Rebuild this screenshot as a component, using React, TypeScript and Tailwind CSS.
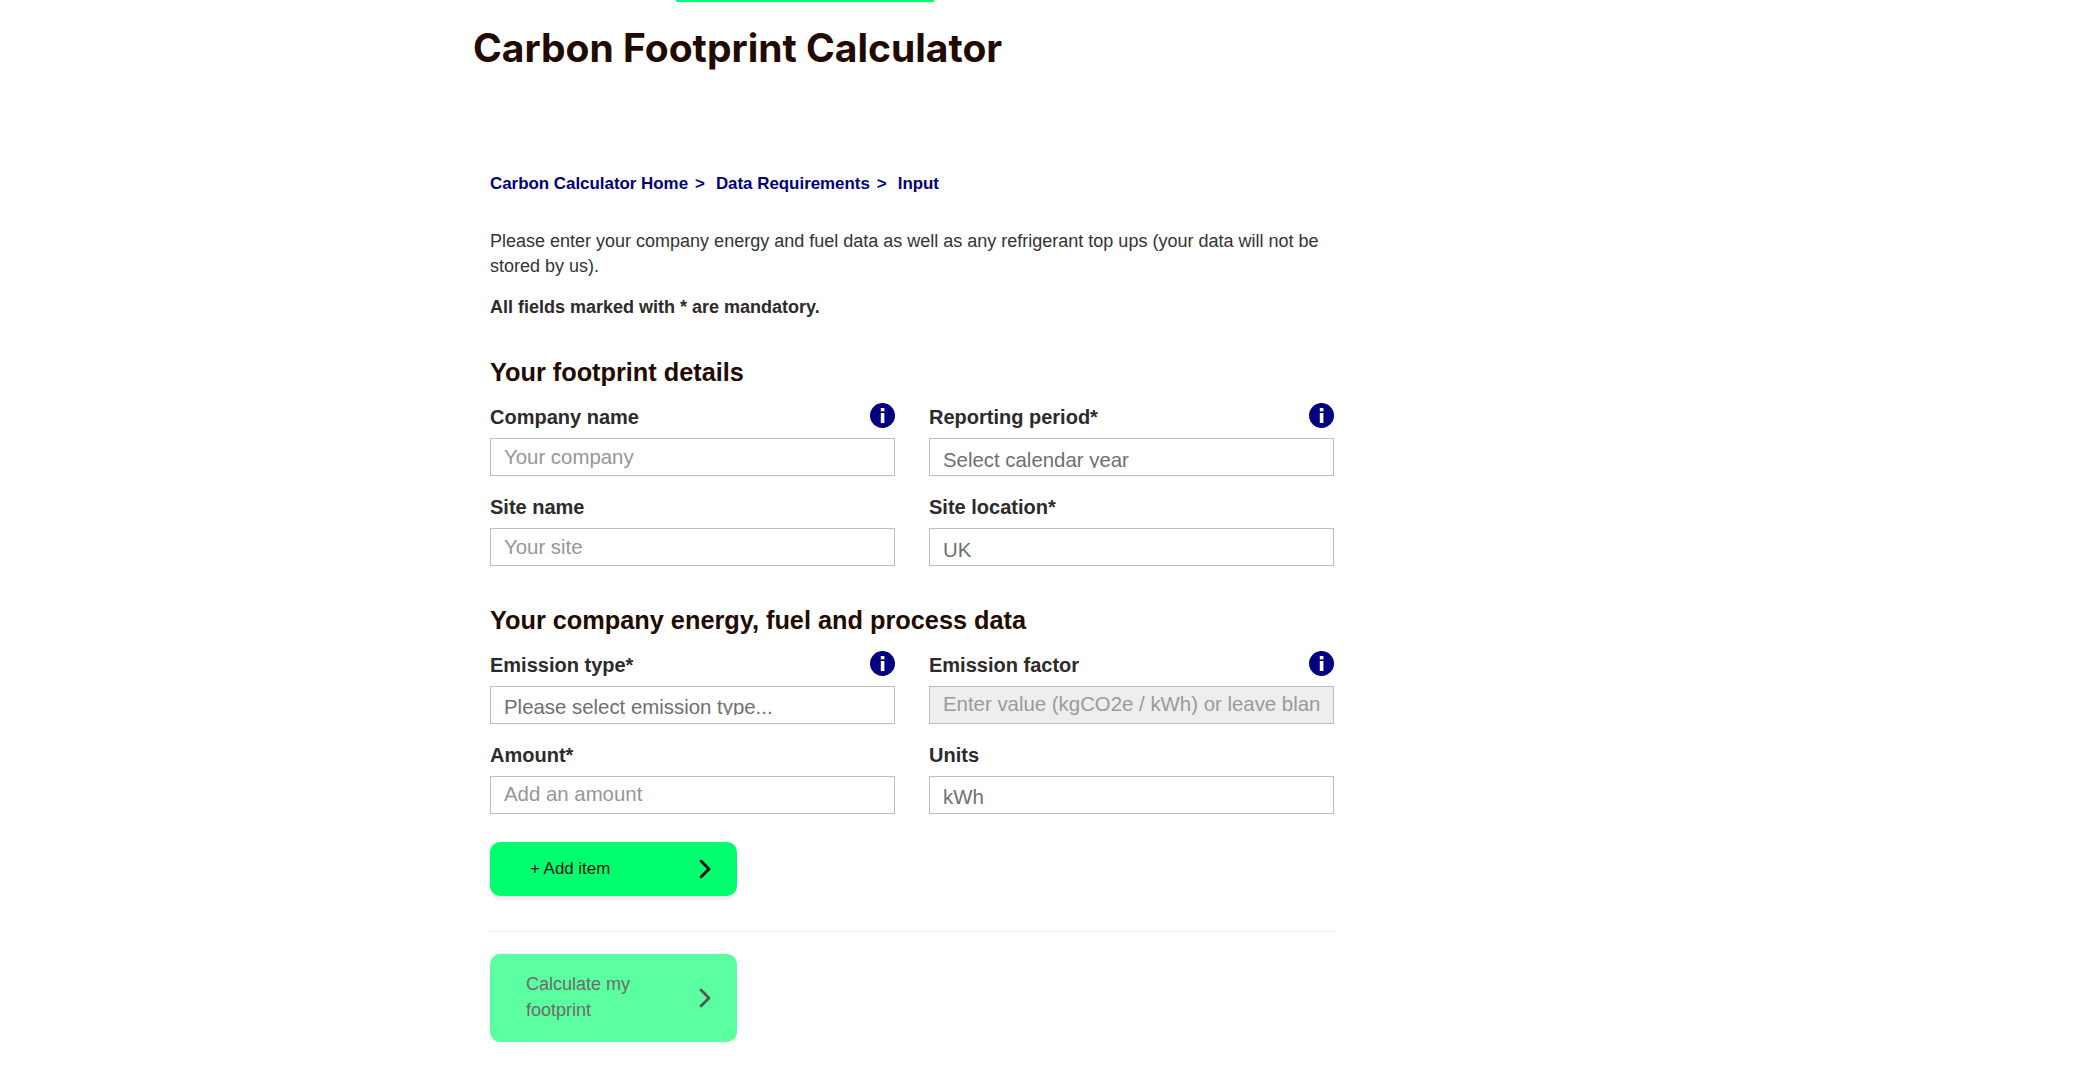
const ChevronIcon = ({ className }: { className: string }) => (
  <svg viewBox="0 0 12 20" className={className} fill="none" stroke="currentColor" strokeWidth="2.8" strokeLinecap="round" strokeLinejoin="round">
    <path d="M2 2l8 8-8 8" />
  </svg>
);

const InfoIcon = () => (
  <svg viewBox="0 0 25 25" className="mt-px h-[25px] w-[25px]">
    <circle cx="12.5" cy="12.5" r="12.5" fill="#000080" />
    <rect x="10.8" y="5" width="3.6" height="3.4" fill="#fff" />
    <rect x="10.8" y="10" width="3.6" height="10" fill="#fff" />
  </svg>
);

interface FieldProps {
  label: string;
  text: string;
  line: string;
  info?: boolean;
  select?: boolean;
  disabled?: boolean;
}

const Field = ({ label, text, line, info, select, disabled }: FieldProps) => (
  <div className="w-[405px]">
    <div className="flex h-[36px] items-start justify-between">
      <span className="mt-[2px] text-[20px] leading-[26px] font-bold text-[#2d2a2a]">{label}</span>
      {info && <InfoIcon />}
    </div>
    <div
      className={`h-[38px] border border-[#bdbdbd] px-[13px] text-[20.4px] whitespace-nowrap ${
        disabled ? "bg-[#eeeeee] text-[#9a9a9a]" : select ? "text-[#6f6f6f]" : "text-[#969696]"
      }`}
    >
      {/* selects clip their text just under the baseline */}
      <div className={`overflow-hidden ${line}`}>{text}</div>
    </div>
  </div>
);

const App = () => {
  return (
    <main className="h-[1066px] overflow-hidden bg-white font-['Liberation_Sans',sans-serif]">
      <div className="ml-[676px] h-[2px] w-[258px] bg-[#00ff6e]" />
      <h1 className="mt-[22px] ml-[473px] text-[39px] leading-[48px] font-bold text-[#220a00] font-['Inter',sans-serif]">
        Carbon Footprint Calculator
      </h1>

      <section className="mt-[100px] ml-[490px] w-[844px]">
        <nav className="flex text-[16.9px] leading-[24px] font-bold text-[#000080]">
          <span>Carbon Calculator Home</span>
          <span className="ml-[7px]">&gt;</span>
          <span className="ml-[11px]">Data Requirements</span>
          <span className="ml-[7px]">&gt;</span>
          <span className="ml-[11px]">Input</span>
        </nav>

        <p className="mt-[33px] text-[18px] leading-[25px] text-[#333333]">
          Please enter your company energy and fuel data as well as any refrigerant top ups (your data will not be stored by us).
        </p>
        <p className="mt-[16px] text-[18px] leading-[25px] font-bold text-[#2d2a2a]">All fields marked with * are mandatory.</p>

        <h2 className="mt-[36px] text-[25.3px] leading-[32px] font-bold text-[#220a00]">Your footprint details</h2>
        <div className="mt-[14px] grid grid-cols-[405px_405px] gap-x-[34px] gap-y-[16px]">
          <Field label="Company name" text="Your company" line="h-[36px] leading-[37px]" info />
          <Field label="Reporting period*" text="Select calendar year" line="h-[29px] leading-[42px]" info select />
          <Field label="Site name" text="Your site" line="h-[36px] leading-[37px]" />
          <Field label="Site location*" text="UK" line="h-[29px] leading-[42px]" select />
        </div>

        <h2 className="mt-[38px] text-[25.3px] leading-[32px] font-bold text-[#220a00]">Your company energy, fuel and process data</h2>
        <div className="mt-[14px] grid grid-cols-[405px_405px] gap-x-[34px] gap-y-[16px]">
          <Field label="Emission type*" text="Please select emission type..." line="h-[28px] leading-[40px]" info select />
          <Field label="Emission factor" text="Enter value (kgCO2e / kWh) or leave blank" line="h-[36px] leading-[35px]" info disabled />
          <Field label="Amount*" text="Add an amount" line="h-[36px] leading-[35px]" />
          <Field label="Units" text="kWh" line="h-[28px] leading-[40px]" select />
        </div>

        <button className="mt-[28px] flex h-[54px] w-[247px] items-center justify-between rounded-[10px] bg-[#00ff6e] pr-[26px] pl-[40px] text-[16.9px] text-[#111] shadow-[0_4px_0_#f0f0f0]">
          <span>+ Add item</span>
          <ChevronIcon className="h-[20px] w-[12px] text-black" />
        </button>

        <hr className="mt-[35px] border-t border-[#eeeeee]" />

        <button className="mt-[22px] flex h-[88px] w-[247px] items-center justify-between rounded-[10px] bg-[#5cffa0] pr-[26px] pl-[36px] text-left text-[18px] leading-[26px] text-[#6b6b6b]">
          <span className="w-[130px] pb-[2px]">Calculate my footprint</span>
          <ChevronIcon className="h-[20px] w-[12px] text-[#555]" />
        </button>
      </section>
    </main>
  );
};

export default App;
